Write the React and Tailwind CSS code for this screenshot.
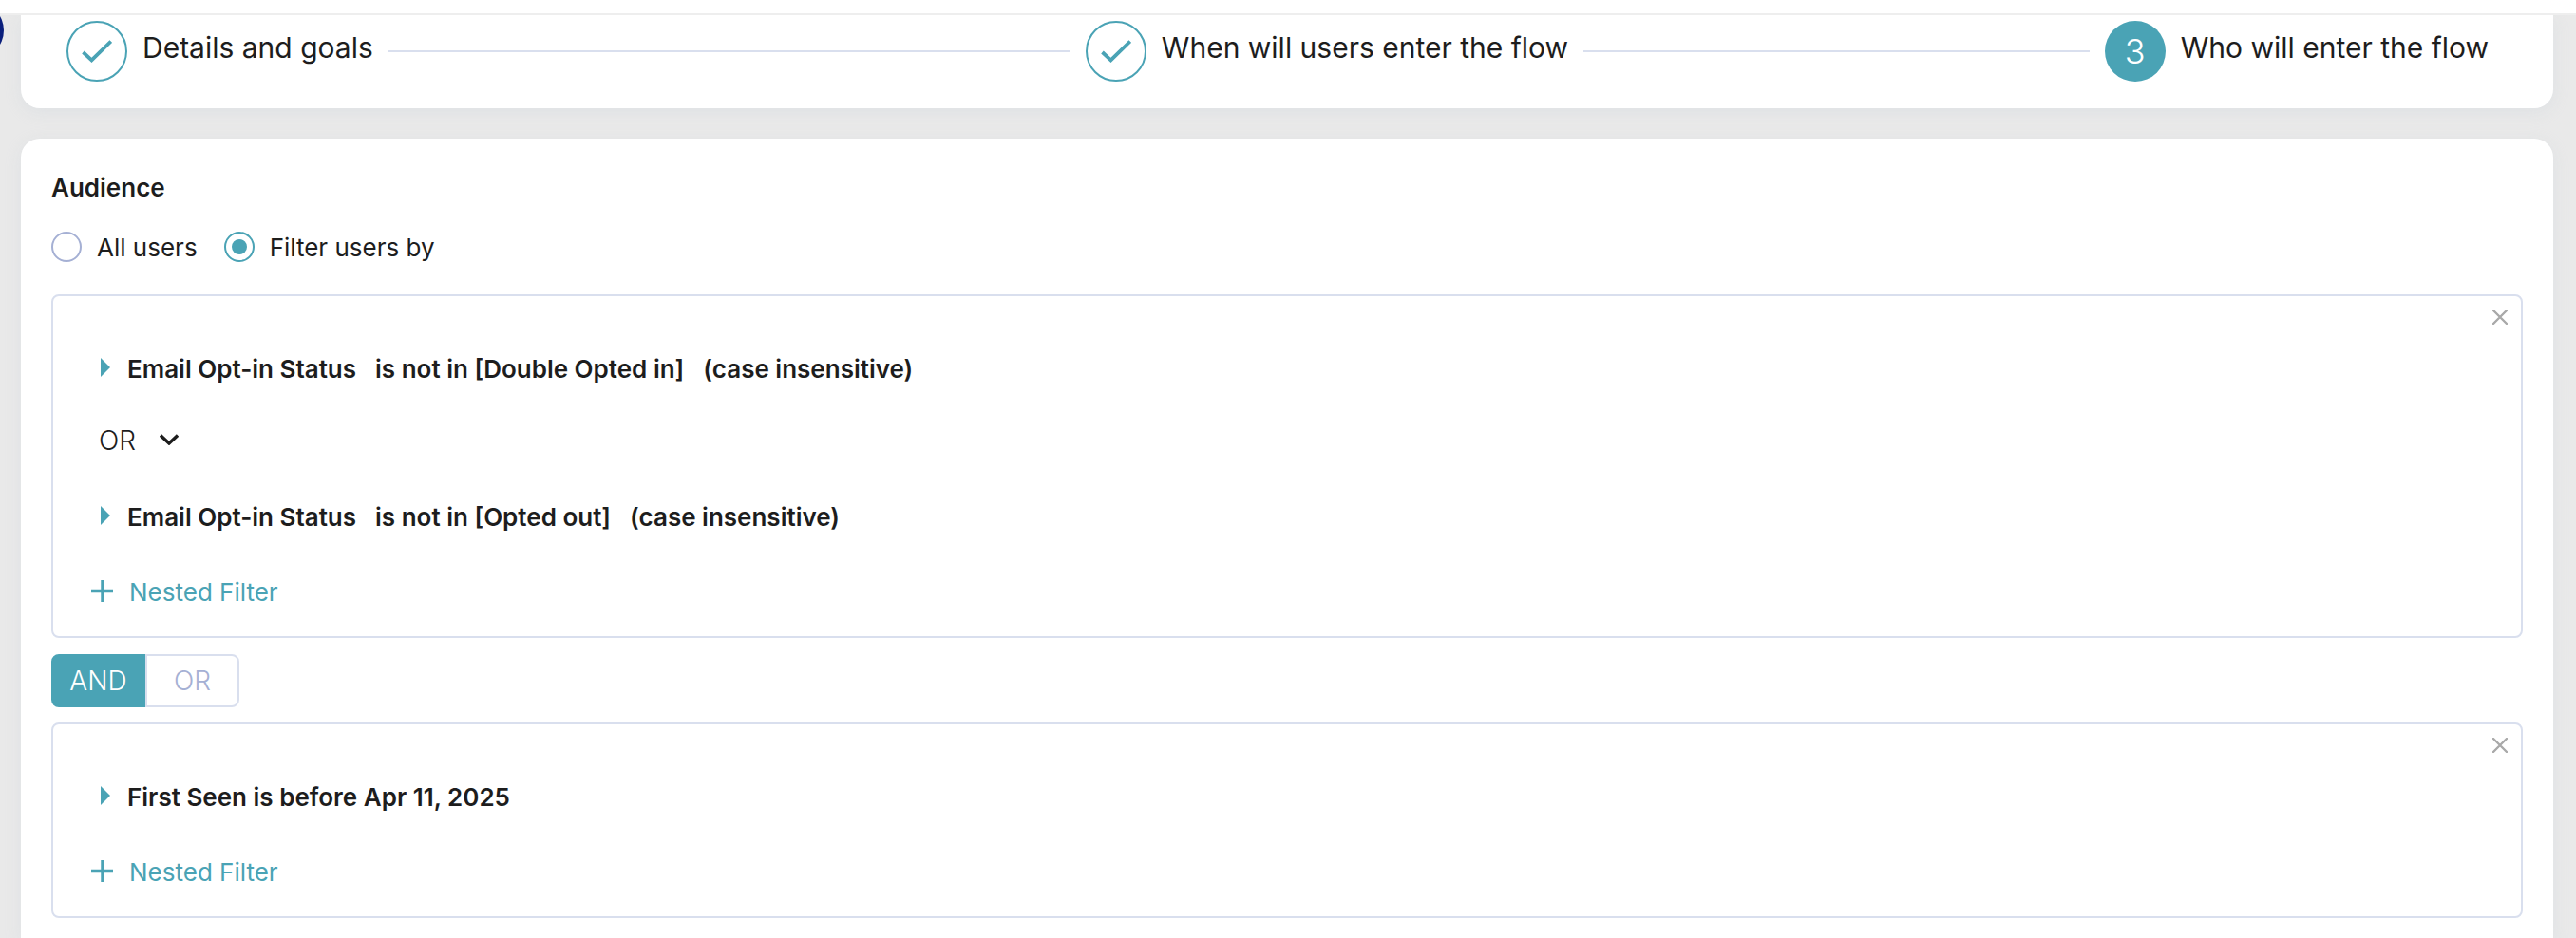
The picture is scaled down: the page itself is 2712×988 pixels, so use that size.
import { useState } from "react";

const STEPS = [
  { label: "Details and goals", done: true },
  { label: "When will users enter the flow", done: true },
  { label: "Who will enter the flow", done: false },
];

const Step = ({ number, label, done, last }) => {
  return (
    <li className={last ? "flex items-start" : "flex flex-1 items-start"}>
      {done ? (
        <span className="flex size-16 shrink-0 items-center justify-center rounded-full border-2 border-[#4aa3b5]">
          <svg className="size-8" viewBox="0 0 32 32" fill="none" stroke="#4aa3b5" strokeWidth="3.8">
            <path d="M1.5 17 L10.5 25.3 L30.8 5.5" />
          </svg>
        </span>
      ) : (
        <span className="flex size-16 shrink-0 items-center justify-center rounded-full bg-[#4aa3b5] text-4xl font-light text-white">
          {number}
        </span>
      )}
      <span className="mx-4 text-[30px] leading-[56px] whitespace-nowrap">{label}</span>
      {!last && <span className="mt-[31px] mr-4 h-0.5 flex-1 bg-[#d9dfee]" />}
    </li>
  );
};

const FilterBox = ({ children }) => {
  return (
    <section className="relative flex flex-col gap-10 rounded-lg border-2 border-[#d9dfee] px-10 pt-[55px] pb-[27px]">
      <button type="button" aria-label="Remove filter" className="absolute top-3.5 right-3.5">
        <svg className="size-4" viewBox="0 0 16 16" stroke="#a9a9a9" strokeWidth="2.4" strokeLinecap="round">
          <path d="M1 1 L15 15 M15 1 L1 15" />
        </svg>
      </button>
      {children}
      <button type="button" className="flex h-10 items-center gap-4 self-start text-[26px] text-[#4aa3b5]">
        <svg className="size-6" viewBox="0 0 24 24" stroke="#4aa3b5" strokeWidth="3.5">
          <path d="M12 0 V23 M0 11.5 H23" />
        </svg>
        Nested Filter
      </button>
    </section>
  );
};

const FilterRow = ({ parts }) => {
  return (
    <button type="button" className="flex h-10 items-center gap-[18px] self-start pl-2.5 text-[26px] font-semibold">
      <svg className="h-5 w-2.5" viewBox="0 0 10 20" fill="#4aa3b5">
        <path d="M0 0 L10 10 L0 20 Z" />
      </svg>
      <span className="flex gap-5 pt-0.5">
        {parts.map((part) => (
          <span key={part}>{part}</span>
        ))}
      </span>
    </button>
  );
};

const App = () => {
  const [audience, setAudience] = useState("filter");
  const [operator, setOperator] = useState("AND");
  const [nested, setNested] = useState("OR");

  const radioClass =
    "size-8 appearance-none rounded-full border-2 border-[#a5b0d4] bg-clip-content p-1.5 checked:border-[#4aa3b5] checked:bg-[#4aa3b5]";

  return (
    <div className="relative flex min-h-screen flex-col overflow-hidden bg-[#e9e9e9] font-['Inter',sans-serif] text-[#1d1d1d]">
      <span className="absolute top-0.5 -left-14 size-15 rounded-full bg-[#0b1f7c]" />
      <header className="relative h-4 border-b-2 border-[#eeeeee] bg-white" />

      <nav className="mr-6 ml-[22px] rounded-b-[20px] bg-white pt-1.5 pr-[52px] pb-7 pl-12 shadow-[0_4px_16px_rgba(200,210,220,0.3)]">
        <ol className="flex">
          {STEPS.map((step, i) => (
            <Step key={step.label} number={i + 1} label={step.label} done={step.done} last={i === STEPS.length - 1} />
          ))}
        </ol>
      </nav>

      <main className="mt-8 mr-6 ml-[22px] flex-1 rounded-t-[20px] bg-white px-8 pt-8 pb-5 shadow-[0_4px_16px_rgba(200,210,220,0.3)]">
        <h2 className="text-[26px] leading-10 font-semibold">Audience</h2>

        <div className="mt-[26px] flex h-8 items-center gap-7 text-[26px]">
          <label className="flex items-center gap-4">
            <input
              type="radio"
              name="audience"
              className={radioClass}
              checked={audience === "all"}
              onChange={() => setAudience("all")}
            />
            All users
          </label>
          <label className="flex items-center gap-4">
            <input
              type="radio"
              name="audience"
              className={radioClass}
              checked={audience === "filter"}
              onChange={() => setAudience("filter")}
            />
            Filter users by
          </label>
        </div>

        <div className="mt-[34px]">
          <FilterBox>
            <FilterRow parts={["Email Opt-in Status", "is not in [Double Opted in]", "(case insensitive)"]} />
            <div className="-mt-1 flex h-10 items-center self-start pl-2">
              <select
                aria-label="Nested operator"
                className="w-[84px] appearance-none pt-0.5 text-[28px] font-light"
                value={nested}
                onChange={(e) => setNested(e.target.value)}
              >
                <option>OR</option>
                <option>AND</option>
              </select>
              <svg className="pointer-events-none -ml-5 h-3 w-5" viewBox="0 0 20 12" fill="none" stroke="#1d1d1d" strokeWidth="3.4">
                <path d="M1 1.5 L10 10 L19 1.5" />
              </svg>
            </div>
            <FilterRow parts={["Email Opt-in Status", "is not in [Opted out]", "(case insensitive)"]} />
          </FilterBox>

          <div className="mt-[17px] mb-4 flex h-14 w-[198px] text-[28px] font-light">
            {["AND", "OR"].map((name) => (
              <button
                key={name}
                type="button"
                aria-pressed={operator === name}
                onClick={() => setOperator(name)}
                className={
                  operator === name
                    ? "flex-1 border-2 border-[#4aa3b5] bg-[#4aa3b5] text-white first:rounded-l-lg last:rounded-r-lg"
                    : "flex-1 border-2 border-[#d9dfee] text-[#a5b0d4] first:rounded-l-lg last:rounded-r-lg"
                }
              >
                {name}
              </button>
            ))}
          </div>

          <FilterBox>
            <FilterRow parts={["First Seen is before Apr 11, 2025"]} />
          </FilterBox>
        </div>
      </main>
    </div>
  );
};

export default App;
